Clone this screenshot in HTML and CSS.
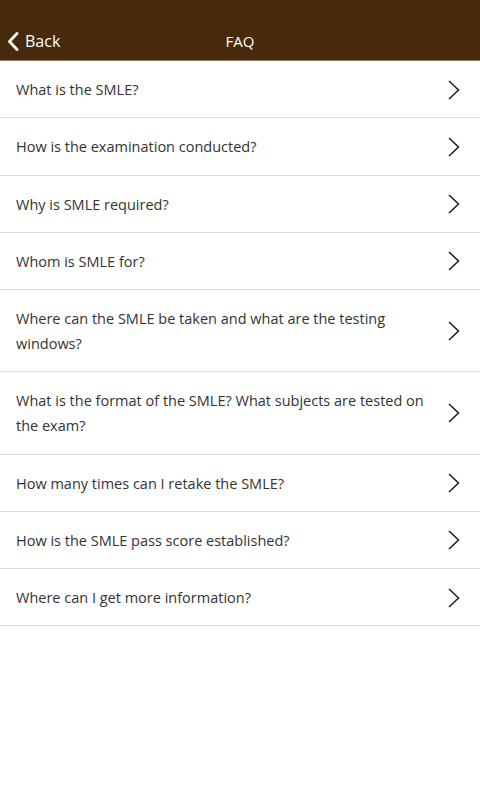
FILE: index.html
```html
<!DOCTYPE html>
<html>
<head>
<meta charset="utf-8">
<link rel="stylesheet" href="styles.css">
</head>
<body>
<header class="bar">
  <div class="back">
    <svg class="back-icon" width="13" height="19" viewBox="0 0 13 19"><path d="M10 1.5 L2.5 9.5 L10 17.5" fill="none" stroke="#fff" stroke-width="2.8" stroke-linecap="round" stroke-linejoin="round"/></svg>
    <span>Back</span>
  </div>
  <div class="title">FAQ</div>
</header>
<ul class="list">
  <li class="item"><span class="q">What is the SMLE?</span><svg class="chev" width="12" height="20" viewBox="0 0 12 20"><path d="M1 1 L10.5 10 L1 19" fill="none" stroke="#222" stroke-width="1.6"/></svg></li>
  <li class="item"><span class="q">How is the examination conducted?</span><svg class="chev" width="12" height="20" viewBox="0 0 12 20"><path d="M1 1 L10.5 10 L1 19" fill="none" stroke="#222" stroke-width="1.6"/></svg></li>
  <li class="item"><span class="q">Why is SMLE required?</span><svg class="chev" width="12" height="20" viewBox="0 0 12 20"><path d="M1 1 L10.5 10 L1 19" fill="none" stroke="#222" stroke-width="1.6"/></svg></li>
  <li class="item"><span class="q">Whom is SMLE for?</span><svg class="chev" width="12" height="20" viewBox="0 0 12 20"><path d="M1 1 L10.5 10 L1 19" fill="none" stroke="#222" stroke-width="1.6"/></svg></li>
  <li class="item"><span class="q">Where can the SMLE be taken and what are the testing windows?</span><svg class="chev" width="12" height="20" viewBox="0 0 12 20"><path d="M1 1 L10.5 10 L1 19" fill="none" stroke="#222" stroke-width="1.6"/></svg></li>
  <li class="item"><span class="q">What is the format of the SMLE? What subjects are tested on the exam?</span><svg class="chev" width="12" height="20" viewBox="0 0 12 20"><path d="M1 1 L10.5 10 L1 19" fill="none" stroke="#222" stroke-width="1.6"/></svg></li>
  <li class="item"><span class="q">How many times can I retake the SMLE?</span><svg class="chev" width="12" height="20" viewBox="0 0 12 20"><path d="M1 1 L10.5 10 L1 19" fill="none" stroke="#222" stroke-width="1.6"/></svg></li>
  <li class="item"><span class="q">How is the SMLE pass score established?</span><svg class="chev" width="12" height="20" viewBox="0 0 12 20"><path d="M1 1 L10.5 10 L1 19" fill="none" stroke="#222" stroke-width="1.6"/></svg></li>
  <li class="item"><span class="q">Where can I get more information?</span><svg class="chev" width="12" height="20" viewBox="0 0 12 20"><path d="M1 1 L10.5 10 L1 19" fill="none" stroke="#222" stroke-width="1.6"/></svg></li>
</ul>
</body>
</html>
```
FILE: styles.css
```css
html, body {
  margin: 0;
  padding: 0;
  background: #fff;
  font-family: "Open Sans", "Noto Sans", sans-serif;
}
.bar {
  height: 60px;
  background: #472a0b;
  border-bottom: 1px solid #8c7b6a;
  display: flex;
  align-items: flex-end;
  position: relative;
  color: #fff;
}
.back {
  display: flex;
  align-items: center;
  gap: 5px;
  padding: 0 0 7px 7px;
  font-size: 16px;
  height: 24px;
}
.back-icon {
  display: block;
}
.title {
  position: absolute;
  left: 0;
  right: 0;
  bottom: 7px;
  height: 24px;
  line-height: 24px;
  text-align: center;
  font-size: 15px;
  pointer-events: none;
}
.list {
  list-style: none;
  margin: 0;
  padding: 0;
}
.item {
  display: flex;
  align-items: center;
  justify-content: space-between;
  padding: 16px 20px 15.25px 16px;
  border-bottom: 1px solid #dcdcdc;
  gap: 20px;
}
.q {
  font-size: 14.5px;
  line-height: 25px;
  color: #333;
}
.chev {
  flex: none;
  display: block;
}
```
